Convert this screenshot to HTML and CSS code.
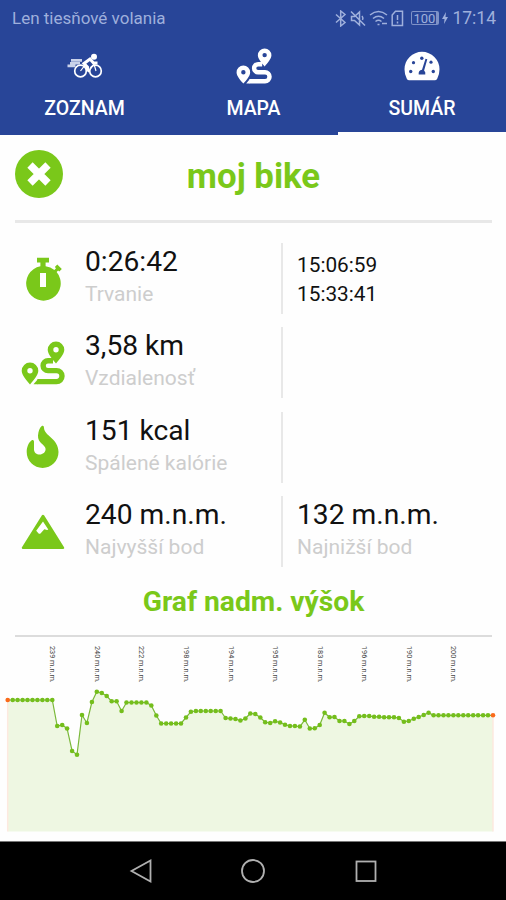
FILE: index.html
```
<!DOCTYPE html>
<html lang="sk">
<head>
    <meta charset="UTF-8">
    <meta name="viewport" content="width=device-width, initial-scale=1.0">
    <title>moj bike</title>
    <link rel="stylesheet" href="styles.css">
</head>
<body>
    <svg width="0" height="0" class="symbols">
        <symbol id="route" viewBox="0 0 44 44">
            <path fill="currentColor" fill-rule="evenodd" d="M9 21.500a8.300 8.300 0 0 0-8.300 8.300c0 4 4.500 9.300 8.300 13.700c3.800-4.400 8.300-9.700 8.300-13.700A8.300 8.300 0 0 0 9 21.500zM9 27a2.700 2.700 0 1 1 0 5.400a2.700 2.700 0 0 1 0-5.400z"/>
            <path fill="currentColor" fill-rule="evenodd" d="M35 .5a8.300 8.300 0 0 0-8.300 8.300c0 4 4.500 9.300 8.300 13.700c3.800-4.400 8.300-9.700 8.300-13.700A8.300 8.300 0 0 0 35 .5zM35 6a2.700 2.700 0 1 1 0 5.400a2.700 2.700 0 0 1 0-5.400z"/>
            <path fill="none" stroke="currentColor" stroke-width="5.400" d="M32 19.800h-5a4.900 4.900 0 0 0 0 9.800h8.500a5.500 5.500 0 0 1 0 11H16.500"/>
            <path fill="currentColor" d="M17 37.900v5.400h-4.500z"/>
        </symbol>
    </svg>

    <header class="header">
        <div class="status">
            <span>Len tiesňové volania</span>
            <div class="status-icons">
                <svg width="12" height="17" viewBox="0 0 12 17"><path d="M1 4.500l9 8-4.300 3.500V1L10 4.500l-9 8"/></svg>
                <svg width="16" height="17" viewBox="0 0 16 17"><path d="M1.500 6.500h3l5-4.500v13l-5-4.500h-3zM1 1.500l14 14M12 6q1.500 2 .5 4"/></svg>
                <svg width="19" height="17" viewBox="0 0 19 17"><path d="M1 5q8.500-7 17 0M4 8.500q5.500-4.500 11 0M6.500 11.500q3-2.500 6 0M8.500 14.500h2M13 13.500h5"/></svg>
                <svg width="13" height="17" viewBox="0 0 13 17"><path d="M4.500 1.200h7v14.300H1.200V5zM6.500 5v5M6.500 11.500v2"/></svg>
                <span class="battery">100</span>
                <svg class="bolt" width="6" height="12" viewBox="0 0 6 12"><path d="M4 0L0 7h2.500L2 12l4-7H3.500z"/></svg>
                <span class="clock">17:14</span>
            </div>
        </div>
        <nav class="tabs">
            <a class="tab">
                <svg width="36" height="36" viewBox="0 0 36 36">
                    <g fill="none" stroke="#fff" stroke-width="1.700">
                        <circle cx="13.500" cy="23" r="5.800"/>
                        <circle cx="28.500" cy="23" r="5.800"/>
                        <path d="M13.500 23l5-6.500 3 7L27 16l2 7" stroke-width="1.200"/>
                        <path d="M20.500 23.500v-4.500l-3.500-3.500 6-4.500 3.500 4h4" stroke-width="3"/>
                    </g>
                    <circle cx="27" cy="8.800" r="3" fill="#fff"/>
                    <path d="M4 11h11v2.700H4zM3 13.900h10v2.500H3zM.5 16.600h8v2.600h-8z" fill="#c9d2ea"/>
                </svg>
                <span>ZOZNAM</span>
            </a>
            <a class="tab">
                <svg width="36" height="36"><use href="#route"/></svg>
                <span>MAPA</span>
            </a>
            <a class="tab active">
                <svg width="36" height="36" viewBox="0 0 36 36">
                    <path fill="#fff" d="M18 3.800A17.500 17.500 0 0 0 .5 21.300q0 5.500 2.300 9.500q.8 1.500 2.500 1.500h25.400q1.700 0 2.500-1.500q2.300-4 2.300-9.500A17.500 17.500 0 0 0 18 3.800z"/>
                    <g fill="#284598">
                        <circle cx="6.700" cy="23.500" r="1.700"/>
                        <circle cx="29.300" cy="23.500" r="1.700"/>
                        <circle cx="9.500" cy="14.700" r="1.600"/>
                        <circle cx="17.800" cy="10.200" r="1.700"/>
                        <circle cx="27" cy="14.200" r="1.600"/>
                        <path d="M21.500 10.800l1.800.5-3.200 11.200q1.700 1.500 1.200 4h-6.600q-.6-4 3.300-4.700z"/>
                    </g>
                </svg>
                <span>SUMÁR</span>
            </a>
        </nav>
    </header>

    <main>
        <div class="title-row">
            <svg width="48" height="48" viewBox="0 0 48 48">
                <circle cx="24" cy="24" r="24" fill="#7ac81a"/>
                <path d="M15 15l18 18M33 15L15 33" stroke="#fff" stroke-width="7.500"/>
            </svg>
            <h1>moj bike</h1>
        </div>

        <section class="stats">
            <div class="row">
                <svg width="44" height="44" viewBox="0 0 44 44">
                    <path fill="#7ac81a" fill-rule="evenodd" d="M16 .8h12v4.700h-3.400v3.800q5 .7 8.800 3.600l1.600-1.600-1.200-1.200 2.500-2.500 4.500 4.500-2.500 2.500-1.200-1.200-1.500 1.700A17.300 17.300 0 1 1 19.400 9.300V5.500H16zM19 16v14h6V16z"/>
                </svg>
                <div class="cell">
                    <div class="value">0:26:42</div>
                    <div class="label">Trvanie</div>
                </div>
                <div class="cell side times">
                    <div>15:06:59</div>
                    <div>15:33:41</div>
                </div>
            </div>
            <div class="row">
                <svg width="44" height="44"><use href="#route"/></svg>
                <div class="cell">
                    <div class="value">3,58 km</div>
                    <div class="label">Vzdialenosť</div>
                </div>
                <div class="cell side"></div>
            </div>
            <div class="row">
                <svg width="44" height="44" viewBox="0 0 44 44">
                    <path fill="#7ac81a" d="M20.500 1.200C22 .2 23 1 23 3c.5 8 14.500 10.500 14.500 24A15.900 15.900 0 0 1 5.700 27c0-5 2-9.500 5-11.700c1.400-.8 2.300 0 2.300 1.500v7.500c0 3.300 2.600 5.300 5.700 5.300s5.900-2.300 5.900-5.500c0-4.500-8.200-6-7.600-13.600c.4-4 1.500-7.800 3.500-9.300z"/>
                </svg>
                <div class="cell">
                    <div class="value">151 kcal</div>
                    <div class="label">Spálené kalórie</div>
                </div>
                <div class="cell side"></div>
            </div>
            <div class="row">
                <svg width="44" height="44" viewBox="0 0 44 44">
                    <path fill="#7ac81a" stroke="#7ac81a" stroke-width="2.500" stroke-linejoin="round" d="M22 6L42 37.800H2z"/>
                    <path fill="#fff" d="M22 11.500l5.300 8q-.8.800-2 .3l-2-.6-3.600 4.100q-1.400 1.200-2.500-.4l-2-2.200z"/>
                </svg>
                <div class="cell">
                    <div class="value">240 m.n.m.</div>
                    <div class="label">Najvyšší bod</div>
                </div>
                <div class="cell side">
                    <div class="value">132 m.n.m.</div>
                    <div class="label">Najnižší bod</div>
                </div>
            </div>
        </section>

        <h2>Graf nadm. výšok</h2>

        <div class="chart-labels">
            <span>239 m.n.m.</span>
            <span>240 m.n.m.</span>
            <span>222 m.n.m.</span>
            <span>198 m.n.m.</span>
            <span>194 m.n.m.</span>
            <span>195 m.n.m.</span>
            <span>183 m.n.m.</span>
            <span>196 m.n.m.</span>
            <span>190 m.n.m.</span>
            <span>200 m.n.m.</span>
        </div>
        <svg id="chart" width="506" height="150" viewBox="0 0 506 150"></svg>
    </main>

    <footer class="navbar">
        <svg width="24" height="26" viewBox="0 0 24 26"><path d="M21.500 2.500v21L2.500 13z"/></svg>
        <svg width="26" height="26" viewBox="0 0 26 26"><circle cx="13" cy="13" r="11"/></svg>
        <svg width="24" height="26" viewBox="0 0 24 26"><rect x="2.500" y="3.500" width="19" height="19.500"/></svg>
    </footer>

    <script>
        // y positions of the altitude samples
        var points = [
            18, 18, 18, 18, 18, 18, 18, 18, 18, 18, 44, 43, 46.5, 69, 72.7, 33, 41, 20, 9.7, 11,
            14, 19.3, 19.3, 29, 20.5, 20.5, 20.5, 20.5, 20.5, 23.5, 33.5, 41.5, 41.5, 41.5, 41.5, 41.5, 35.5, 29.7, 29, 29,
            29, 29, 29, 29, 36, 36.5, 37, 38.5, 36.5, 31.5, 32, 35.5, 40.3, 41, 39.3, 40.5, 42.7, 44, 44, 44.5,
            37.8, 46.5, 46.3, 43, 30.7, 35.3, 35, 39, 39, 42, 39, 34.3, 34, 34, 34.8, 34.8, 35.3, 35.3, 35.3, 36,
            39.7, 39, 36.7, 35, 33, 30.7, 33.3, 33.3, 33.3, 33.3, 33.3, 33.3, 33.3, 33.3, 33.3, 33.3, 33.3, 33.3, 33.3
        ];
        var left = 7.7;
        var step = 4.952;
        var bottom = 149.5;

        var line = '';
        var dots = '';
        for (var i = 0; i < points.length; i++) {
            var x = (left + i * step).toFixed(1);
            var end = i === 0 || i === points.length - 1;
            line += x + ',' + points[i] + ' ';
            dots += '<circle class="' + (end ? 'dot end' : 'dot') + '" cx="' + x + '" cy="' + points[i] + '" r="2.3"/>';
        }
        var right = left + (points.length - 1) * step;

        document.getElementById('chart').innerHTML =
            '<polygon class="area" points="' + left + ',' + bottom + ' ' + line + right + ',' + bottom + '"/>' +
            '<path class="edge" d="M' + left + ' 18V' + bottom + 'M' + right + ' 33.3V' + bottom + '"/>' +
            '<polyline class="line" points="' + line + '"/>' + dots;
    </script>
</body>
</html>
```
FILE: styles.css
```
* {
    box-sizing: border-box;
}
body {
    margin: 0;
    width: 506px;
    height: 900px;
    display: flex;
    flex-direction: column;
    overflow: hidden;
    font-family: Roboto, sans-serif;
    background-color: #fefefe;
    color: #111;
}
svg {
    display: block;
    flex-shrink: 0;
}
.symbols {
    position: absolute;
}
.header {
    height: 135px;
    background-color: #284598;
    color: #fff;
}
.status {
    height: 36px;
    padding: 0 10px 0 12px;
    display: flex;
    align-items: center;
    justify-content: space-between;
    font-size: 17px;
    color: #9fb0dc;
}
.status-icons {
    display: flex;
    align-items: center;
    gap: 3px;
}
.status-icons svg {
    fill: none;
    stroke: #9fb0dc;
    stroke-width: 1.5;
}
.status-icons .bolt {
    fill: #9fb0dc;
    stroke: none;
}
.battery {
    height: 14px;
    margin-left: 4px;
    padding: 0 1px;
    border: 1px solid #7f92c8;
    border-right-width: 3px;
    border-radius: 2px;
    font-size: 13px;
    line-height: 13px;
}
.clock {
    margin-left: 1px;
    font-size: 17.5px;
}
.tabs {
    display: grid;
    grid-template-columns: 169px 169px 168px;
    height: 99px;
}
.tab {
    display: flex;
    flex-direction: column;
    align-items: center;
    padding-top: 12px;
    gap: 13px;
    font-size: 19.5px;
    font-weight: 500;
    line-height: 24px;
}
.tab.active {
    border-bottom: 3px solid #fefefe;
}
main {
    height: 706px;
}
.title-row {
    display: grid;
    grid-template-columns: 48px 1fr 48px;
    align-items: center;
    height: 88px;
    margin: 0 14px 0 15px;
    padding-bottom: 7px;
    border-bottom: 3px solid #e8e8e8;
}
h1 {
    margin: 3px 0 0;
    text-align: center;
    font-size: 34.8px;
    font-weight: 700;
    color: #7ac81a;
}
.stats {
    padding: 20px 15px 0 21px;
    display: grid;
    gap: 13.4px;
}
.row {
    display: grid;
    grid-template-columns: 44px 216px 1fr;
    align-items: center;
    height: 71px;
    color: #111;
}
.row > svg {
    color: #7ac81a;
}
.cell {
    height: 71px;
    padding: 2px 0 0 20px;
}
.side {
    padding-left: 14px;
    border-left: 2px solid #e8e8e8;
}
.value {
    font-size: 28.2px;
    line-height: 34px;
}
.label {
    font-size: 21px;
    line-height: 30px;
    color: #cdcdcd;
}
.times {
    padding-top: 8px;
    font-size: 20.8px;
    line-height: 29px;
}
h2 {
    height: 69.5px;
    margin: 0 14px 0 15px;
    padding-top: 16.5px;
    border-bottom: 2px solid #dcdcdc;
    text-align: center;
    font-size: 28.2px;
    font-weight: 700;
    line-height: 36px;
    color: #7ac81a;
}
.chart-labels {
    height: 45.5px;
    margin-left: 30px;
    padding-top: 9px;
    display: grid;
    grid-template-columns: repeat(10, 44.57px);
    justify-items: center;
    font-size: 7.3px;
    line-height: 8px;
    color: #444;
}
.chart-labels span {
    writing-mode: vertical-rl;
    white-space: nowrap;
}
.area {
    fill: #eef7e2;
}
.edge {
    stroke: #fde9df;
    stroke-width: 1.5;
}
.line {
    fill: none;
    stroke: #7ab83a;
    stroke-width: 1.2;
}
.dot {
    fill: #74be1c;
}
.dot.end {
    fill: #fa6a1a;
}
.navbar {
    height: 59px;
    border-top: 1px solid #777;
    background-color: #000;
    display: flex;
    align-items: center;
    justify-content: center;
    gap: 87.5px;
}
.navbar svg {
    fill: none;
    stroke: #b0b0b0;
    stroke-width: 1.8;
}
```
